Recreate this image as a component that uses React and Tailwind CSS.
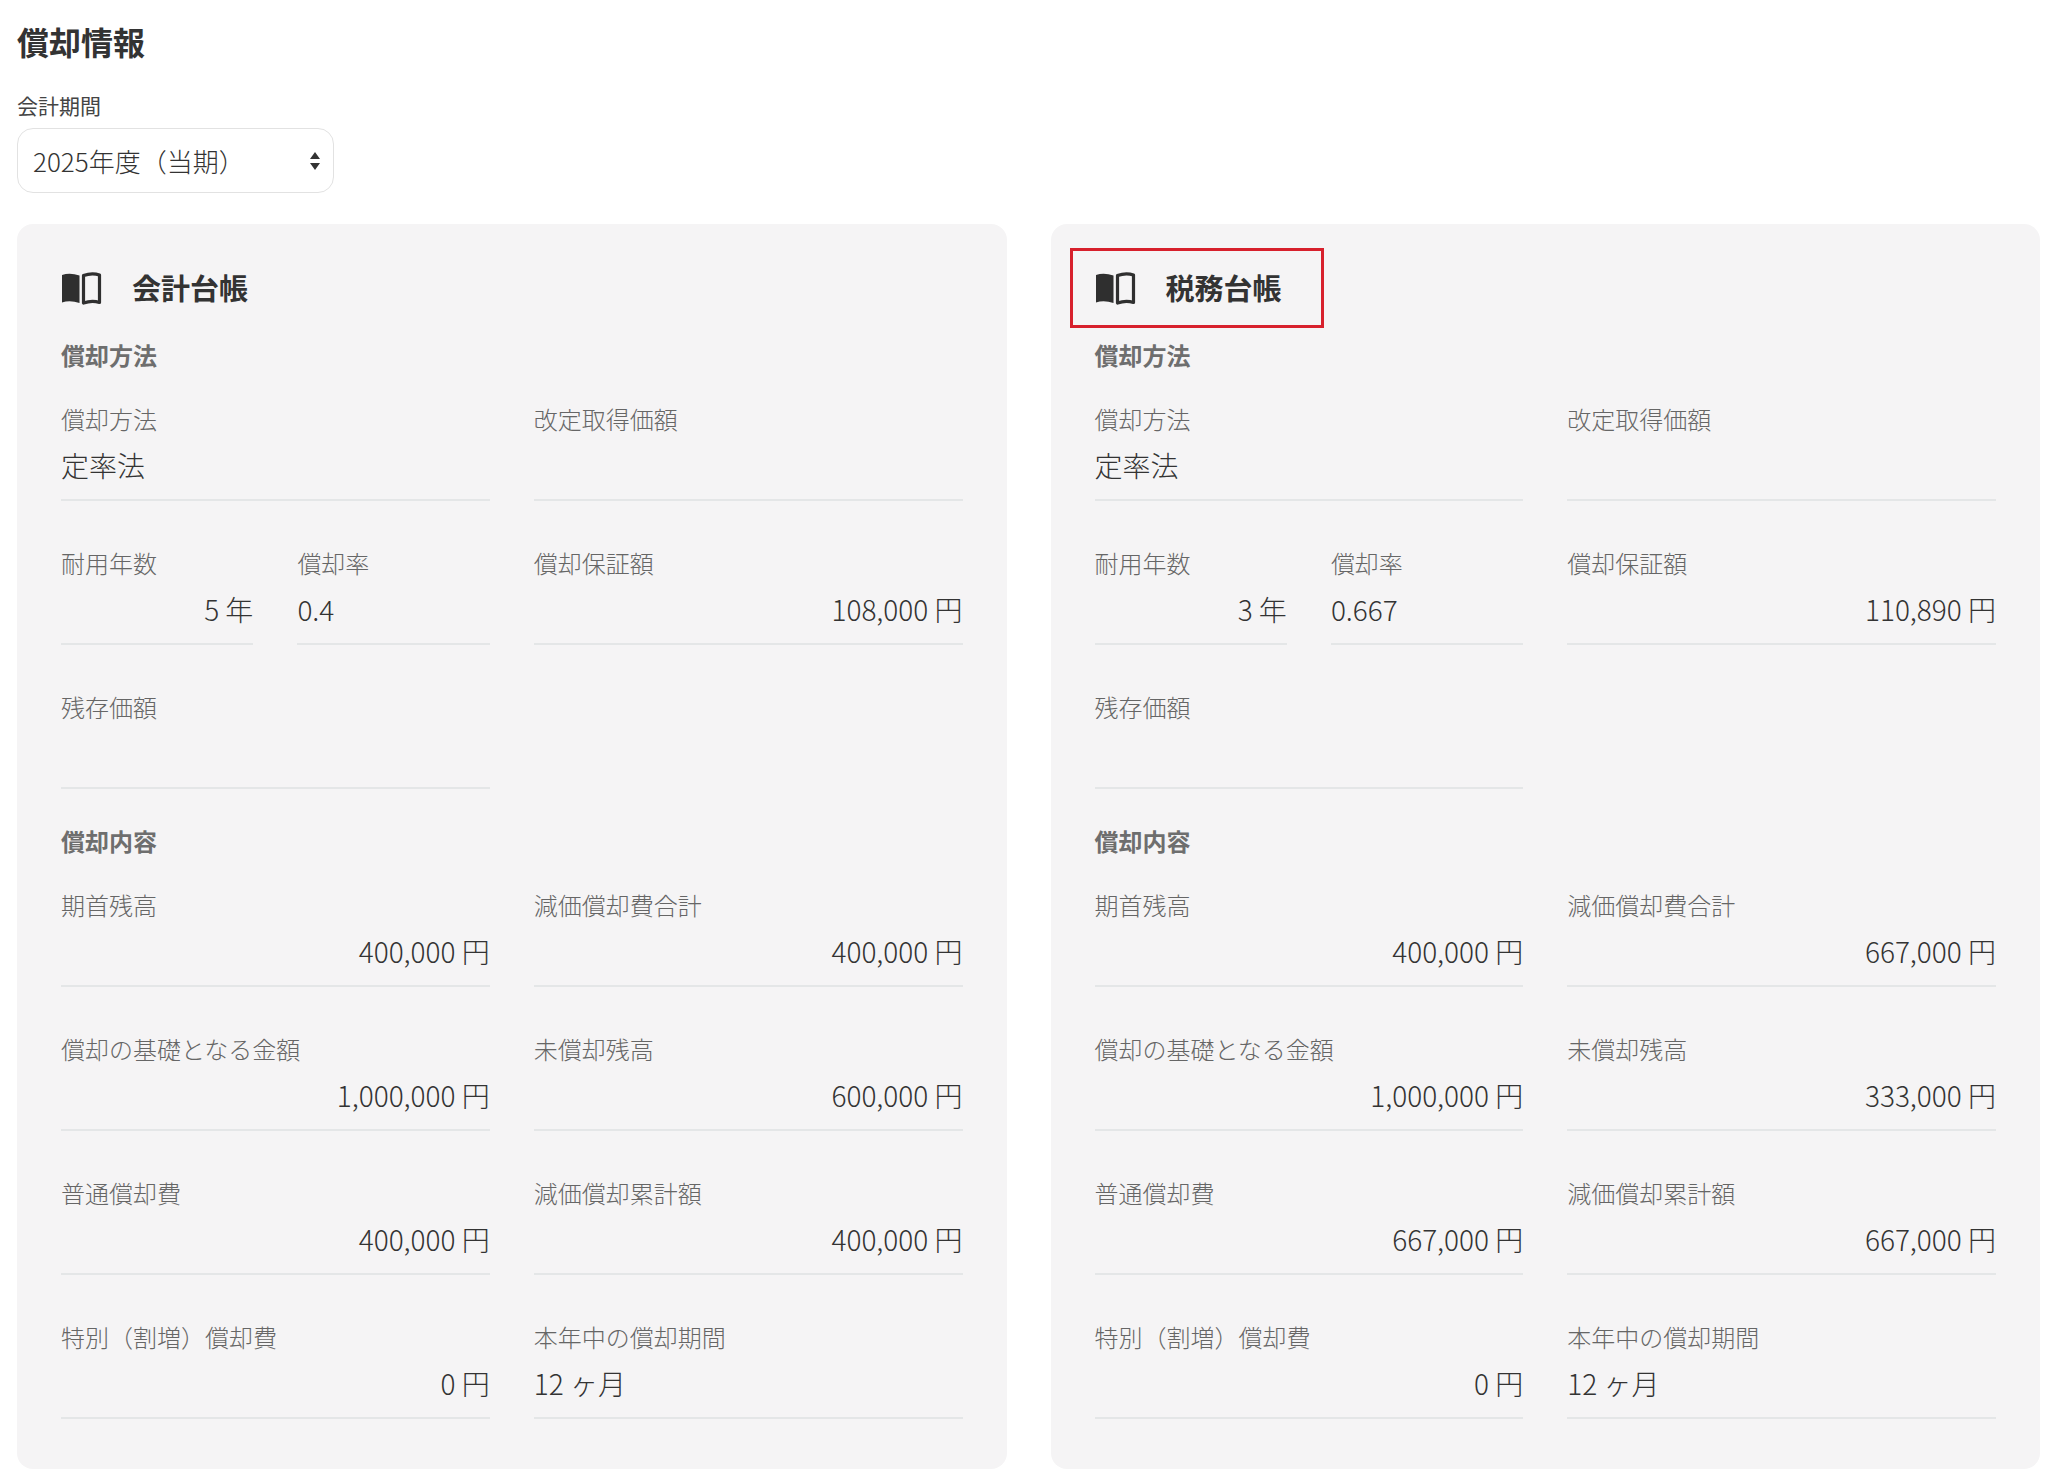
import React from "react";

const F = { fontFamily: '"Noto Sans CJK JP", "Noto Sans", sans-serif' };

function Book() {
  return (
    <svg width="42" height="34" viewBox="0 0 42 34">
      <path d="M2 4 Q10 1.5 19.5 4.5 V32 Q10 29 2 31.5 Z" fill="#2f2f2f" />
      <path d="M23.5 4.5 Q32 1.5 39.5 4 V31.5 Q32 29 23.5 32 Z" fill="none" stroke="#2f2f2f" strokeWidth="3.2" strokeLinejoin="round" />
    </svg>
  );
}

function Field({ label, value, right, className = "" }) {
  return (
    <div className={"flex flex-col border-b-2 border-[#e4e6e7] pb-[15px] " + className}>
      <div className="text-[24px] font-light leading-[30px] text-[#666]">{label}</div>
      <div className={"mt-[12px] h-[38px] text-[28px] font-light leading-[38px] text-[#333] " + (right ? "text-right" : "")}>{value}</div>
    </div>
  );
}

function Card({ title, d, highlight }) {
  return (
    <div className="rounded-[16px] bg-[#f5f4f5] px-[44px] pt-[24px] pb-[50px]">
      <div className={"-mx-[25px] flex h-[80px] w-[254px] items-center gap-[30px] border-[3px] px-[21px] " + (highlight ? "border-[#d7202c]" : "border-transparent")}>
        <Book />
        <span className="text-[29px] font-bold text-[#333]">{title}</span>
      </div>
      <div className="mt-[12px] text-[24px] font-bold leading-[30px] text-[#6e6e6e]">償却方法</div>
      <div className="mt-[34px] grid grid-cols-2 gap-x-[44px] gap-y-[47px]">
        <Field label="償却方法" value="定率法" />
        <Field label="改定取得価額" value="" />
        <div className="grid grid-cols-2 gap-x-[44px]">
          <Field label="耐用年数" value={d.years} right />
          <Field label="償却率" value={d.rate} />
        </div>
        <Field label="償却保証額" value={d.guarantee} right />
        <Field label="残存価額" value="" />
        <div />
      </div>
      <div className="mt-[37px] text-[24px] font-bold leading-[30px] text-[#6e6e6e]">償却内容</div>
      <div className="mt-[34px] grid grid-cols-2 gap-x-[44px] gap-y-[47px]">
        <Field label="期首残高" value="400,000 円" right />
        <Field label="減価償却費合計" value={d.total} right />
        <Field label="償却の基礎となる金額" value="1,000,000 円" right />
        <Field label="未償却残高" value={d.remain} right />
        <Field label="普通償却費" value={d.normal} right />
        <Field label="減価償却累計額" value={d.accum} right />
        <Field label="特別（割増）償却費" value="0 円" right />
        <Field label="本年中の償却期間" value="12 ヶ月" />
      </div>
    </div>
  );
}

export default function App() {
  return (
    <div style={F} className="min-h-[1478px] bg-white pl-[17px] pr-[8px] pt-[20px] text-[#333]">
      <h1 className="text-[32px] font-bold leading-[42px] text-[#333]">償却情報</h1>
      <div className="mt-[30px] text-[21px] leading-[26px] text-[#444]">会計期間</div>
      <div className="mt-[10px] flex h-[65px] w-[317px] items-center justify-between rounded-[16px] border border-[#e2e2e2] bg-white pl-[15px] pr-[12px]">
        <span className="text-[26px] font-light text-[#333]">2025年度（当期）</span>
        <svg width="12" height="22" viewBox="0 0 12 22"><path d="M6 2 L11 9 H1 Z M6 20 L11 13 H1 Z" fill="#333" /></svg>
      </div>
      <div className="mt-[31px] grid grid-cols-2 gap-[44px]">
        <Card title="会計台帳" d={{ years: "5 年", rate: "0.4", guarantee: "108,000 円", total: "400,000 円", remain: "600,000 円", normal: "400,000 円", accum: "400,000 円" }} />
        <Card title="税務台帳" highlight d={{ years: "3 年", rate: "0.667", guarantee: "110,890 円", total: "667,000 円", remain: "333,000 円", normal: "667,000 円", accum: "667,000 円" }} />
      </div>
    </div>
  );
}
